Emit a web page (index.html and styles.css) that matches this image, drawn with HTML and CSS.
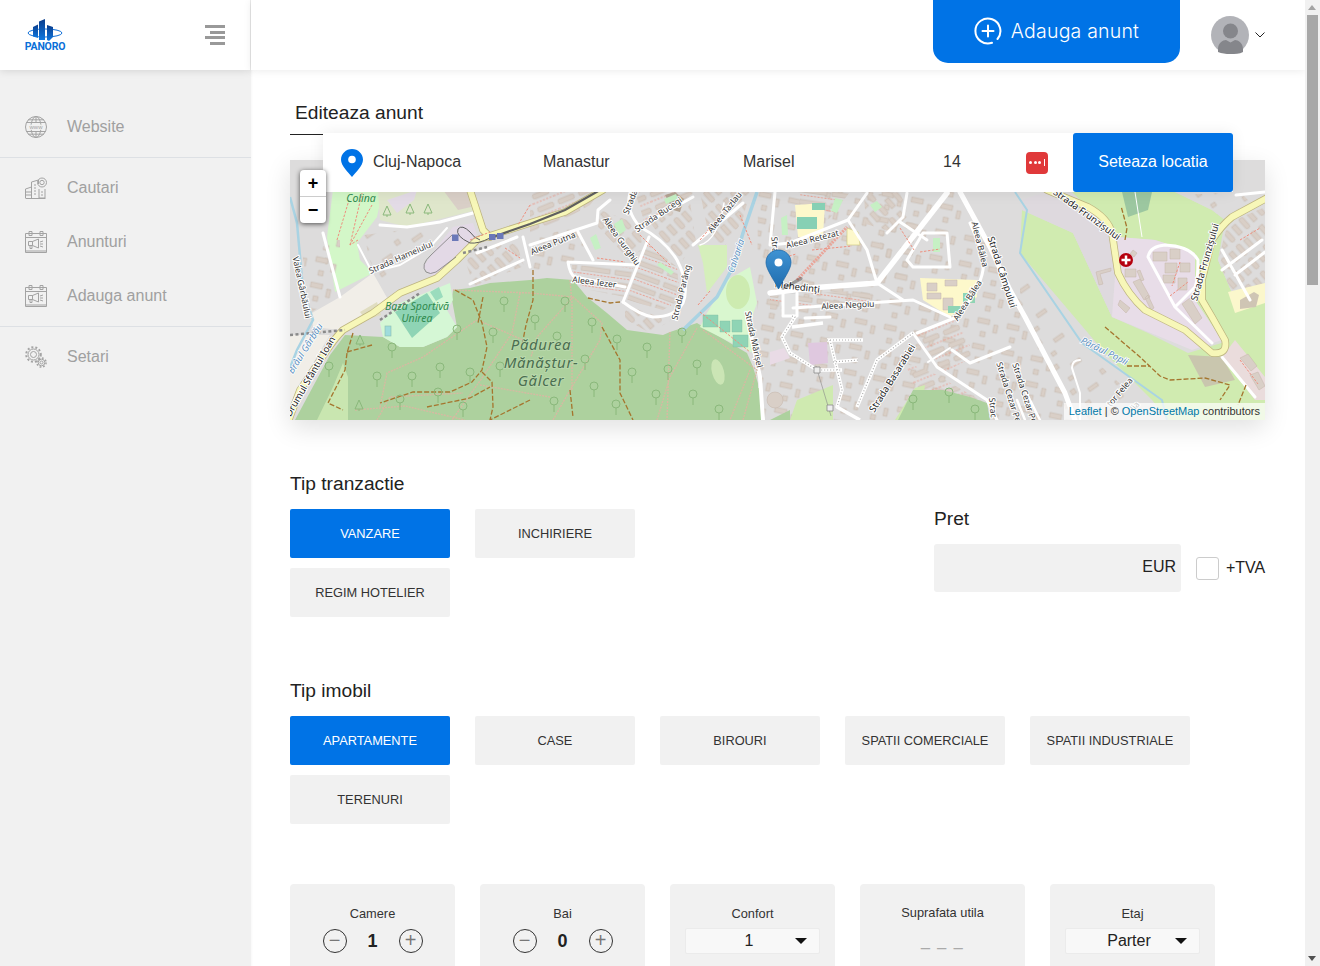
FILE: index.html
```html
<!DOCTYPE html>
<html lang="ro">
<head>
    <meta charset="UTF-8">
    <meta name="viewport" content="width=device-width, initial-scale=1.0">
    <title>Editeaza anunt</title>
    <link rel="stylesheet" href="styles.css">
</head>
<body>
<div class="layout">
    <aside class="sidebar">
        <div class="sidebar-head">
            <div class="logo">
                <svg width="40" height="22" viewBox="0 0 40 22">
                    <defs>
                        <linearGradient id="logoBlue" x1="0" y1="0" x2="0" y2="1">
                            <stop offset="0" stop-color="#0a3c8c"/>
                            <stop offset="1" stop-color="#0f78e0"/>
                        </linearGradient>
                    </defs>
                    <ellipse cx="20" cy="14" rx="17" ry="4" fill="none" stroke="#0f6fd8" stroke-width="1"/>
                    <path d="M8 8l5-2.500V19l-5-1.500z" fill="url(#logoBlue)"/>
                    <path d="M14 2.500L20 0v21h-6z" fill="url(#logoBlue)"/>
                    <path d="M22 6l6 2v10l-4 4-2-1z" fill="url(#logoBlue)"/>
                </svg>
                <span class="logo-text">PANORO</span>
            </div>
            <div class="burger"><span></span><span class="short"></span><span></span><span class="short"></span></div>
        </div>
        <nav class="nav-group">
            <a class="nav-item">
                <svg class="nav-icon" viewBox="0 0 22 22" fill="none" stroke="#a3a3a3" stroke-width="1">
                    <circle cx="11" cy="11" r="10.500"/><ellipse cx="11" cy="11" rx="5" ry="10.500"/><path d="M11 .5v6M11 15.500v6M3 3.800h16M1.500 6.500h19M1.500 15.500h19M3 18.200h16"/>
                    <text x="11" y="13" text-anchor="middle" class="www">www</text>
                </svg>
                <span>Website</span>
            </a>
        </nav>
        <nav class="nav-group">
            <a class="nav-item">
                <svg class="nav-icon" viewBox="0 0 22 22" fill="none" stroke="#a3a3a3" stroke-width="1">
                    <path d="M.5 21.500h20M.5 21v-9l6-2v11M6.500 21V5l7-2v4M14 12v9h6v-9M1 15h5M1 18h5M9 8h2M9 11h2M9 14h2M9 17h2M16 15h2M16 18h2"/>
                    <circle cx="17" cy="5.500" r="4.500"/><circle cx="17" cy="5.500" r="2.200"/>
                </svg>
                <span>Cautari</span>
            </a>
            <a class="nav-item">
                <svg class="nav-icon" viewBox="0 0 22 22" fill="none" stroke="#a3a3a3" stroke-width="1">
                    <path d="M.5 2.500h21v19H.5zM.5 6.500h21M.5 20h21M4 .5h3v4H4zM15 .5h3v4h-3z"/>
                    <path d="M3.500 10.500h4v4h-4zM7.500 10.500l6-2.500v9l-6-2.500zM5 14.500v3h2v-3M15 11l3-1M15 13h3M15 15l3 1"/>
                </svg>
                <span>Anunturi</span>
            </a>
            <a class="nav-item">
                <svg class="nav-icon" viewBox="0 0 22 22" fill="none" stroke="#a3a3a3" stroke-width="1">
                    <path d="M.5 2.500h21v19H.5zM.5 6.500h21M.5 20h21M4 .5h3v4H4zM15 .5h3v4h-3z"/>
                    <path d="M3.500 10.500h4v4h-4zM7.500 10.500l6-2.500v9l-6-2.500zM5 14.500v3h2v-3M15 11l3-1M15 13h3M15 15l3 1"/>
                </svg>
                <span>Adauga anunt</span>
            </a>
        </nav>
        <nav class="nav-group last">
            <a class="nav-item">
                <svg class="nav-icon" viewBox="0 0 22 22" fill="none" stroke="#a3a3a3" stroke-width="1">
                    <circle cx="8.500" cy="8.500" r="3"/><circle cx="8.500" cy="8.500" r="5.500"/>
                    <circle cx="8.500" cy="8.500" r="7.300" stroke-width="2" stroke-dasharray="2 2"/>
                    <circle cx="16.500" cy="16.500" r="1.500"/><circle cx="16.500" cy="16.500" r="3.300"/>
                    <circle cx="16.500" cy="16.500" r="4.600" stroke-width="1.500" stroke-dasharray="1.800 1.800"/>
                </svg>
                <span>Setari</span>
            </a>
        </nav>
    </aside>

    <div class="page">
        <header class="topbar">
            <a class="add-btn">
                <svg width="28" height="28" viewBox="0 0 28 28" fill="none" stroke="#fff" stroke-width="2" stroke-linecap="round">
                    <path d="M18 25.800A12.500 12.500 0 1 1 23.500 22"/><path d="M14 8.500v11M8.500 14h11"/>
                </svg>
                <span>Adauga anunt</span>
            </a>
            <div class="user">
                <svg width="38" height="38" viewBox="0 0 38 38">
                    <circle cx="19" cy="19" r="19" fill="#b2b3b8"/>
                    <circle cx="19.500" cy="15" r="7.500" fill="#85868b"/>
                    <path d="M7 36v-3c0-6 5-9 8-9l4.500 2.500L24 24c3 0 8 3 8 9v3c-3.500 2-8 2-12.500 2s-9-.5-12.500-2z" fill="#85868b"/>
                </svg>
                <svg width="10" height="6" viewBox="0 0 10 6" fill="none" stroke="#222" stroke-width="1"><path d="M.5.500L5 5 9.500.500"/></svg>
            </div>
        </header>

        <main class="content">
            <h2 class="page-title">Editeaza anunt</h2>

            <div class="map-wrap">
                <svg class="map" viewBox="290 160 975 260" width="975" height="260">
                    <defs>
                        <pattern id="rowsA" width="36" height="12" patternUnits="userSpaceOnUse" patternTransform="rotate(20)">
                            <rect x="1" y="2" width="31" height="4.500" fill="#d9cfc7" stroke="#c4b5a9" stroke-width=".5"/>
                            <path d="M0 9.500h36" stroke="#ee8f7e" stroke-width=".8" stroke-dasharray="2 1.500"/>
                        </pattern>
                        <pattern id="rowsB" width="34" height="12" patternUnits="userSpaceOnUse" patternTransform="rotate(8)">
                            <rect x="1" y="2" width="29" height="4.500" fill="#d9cfc7" stroke="#c4b5a9" stroke-width=".5"/>
                            <path d="M0 9.500h34" stroke="#ee8f7e" stroke-width=".8" stroke-dasharray="2 1.500"/>
                        </pattern>
                        <pattern id="rowsC" width="22" height="14" patternUnits="userSpaceOnUse" patternTransform="rotate(-22)">
                            <rect x="2" y="2" width="17" height="5" rx="2" fill="#d9cfc7" stroke="#c4b5a9" stroke-width=".5"/>
                            <path d="M0 11h22" stroke="#ee8f7e" stroke-width=".7" stroke-dasharray="2 1.500"/>
                        </pattern>
                        <pattern id="rowsD" width="18" height="20" patternUnits="userSpaceOnUse" patternTransform="rotate(48)">
                            <rect x="2" y="2" width="13" height="5" rx="2" fill="#d9cfc7" stroke="#c4b5a9" stroke-width=".5"/>
                            <rect x="3" y="12" width="11" height="5" fill="#d9cfc7" stroke="#c4b5a9" stroke-width=".5"/>
                        </pattern>
                        <pattern id="sparse" width="30" height="26" patternUnits="userSpaceOnUse" patternTransform="rotate(12)">
                            <rect x="3" y="3" width="12" height="5" fill="#d9cfc7" stroke="#c4b5a9" stroke-width=".5"/>
                            <rect x="20" y="7" width="4" height="8" fill="#d9cfc7" stroke="#c4b5a9" stroke-width=".5"/>
                            <rect x="8" y="16" width="5" height="5" fill="#d9cfc7" stroke="#c4b5a9" stroke-width=".5"/>
                        </pattern>
                        <pattern id="sparseR" width="36" height="30" patternUnits="userSpaceOnUse" patternTransform="rotate(-35)">
                            <rect x="4" y="4" width="5" height="5" fill="#d9cfc7" stroke="#c4b5a9" stroke-width=".5"/>
                            <rect x="20" y="12" width="11" height="4" fill="#d9cfc7" stroke="#c4b5a9" stroke-width=".5"/>
                            <rect x="10" y="22" width="5" height="4" fill="#d9cfc7" stroke="#c4b5a9" stroke-width=".5"/>
                        </pattern>
                        <linearGradient id="pinBlue" x1="0" y1="0" x2="0" y2="1">
                            <stop offset="0" stop-color="#3f93d3"/>
                            <stop offset="1" stop-color="#1f6cae"/>
                        </linearGradient>
                        <g id="tree" fill="none" stroke="#8ab87b" stroke-width="1"><circle cx="0" cy="-11" r="4"/><path d="M0-7V0"/></g>
                        <path id="fir" d="M0-10l-4 9h8zM0-1v2" fill="none" stroke="#8ab87b" stroke-width="1"/>
                    </defs>

                    <rect x="290" y="160" width="975" height="260" fill="#dddcdc"/>

                    <!-- zone din stanga -->
                    <path d="M327 237L333 190H383L377 217 357 243 360 260 373 273 335 292z" fill="#d3f7c8"/>
                    <path d="M340 297L373 273 390 303 357 323 340 330 313 327 312 313z" fill="#f1eee8"/>
                    <path d="M360 312l17-10 4 13-15 5z" fill="#e0ddc0"/>
                    <path d="M290 335H330L300 385 290 405z" fill="#f1eee8"/>
                    <path d="M378 190H467L477 210 407 227 380 220z" fill="#dfe6cb"/>
                    <path d="M387 200l30-10-3 10-17 13z" fill="#e3dbe6"/>
                    <path d="M443 190h24l4 17-13 3z" fill="#d9cfc7"/>
                    <path d="M423 267L437 247 453 227 473 223 480 243 447 270 433 277z" fill="#e3d9e6"/>
                    <path d="M325 240h15v50h-15z" fill="url(#sparse)"/>
                    <path d="M302 252l22-6 14 48-26 18z" fill="url(#sparse)"/>
                    <path d="M364 235l62-8 4 18-30 22-18 18-12-24z" fill="url(#sparseR)"/>
                    <path d="M464 258l50-22 10 30-50 20z" fill="url(#rowsD)"/>

                    <!-- padure -->
                    <path d="M295 420L330 355 345 335 383 337 400 347 423 347 447 337 457 327 452 300 453 290 470 288 490 283 530 280 547 278 573 280 587 297 607 313 627 330 663 335 670 332 697 323 720 337 747 353 753 367 760 390 763 420z" fill="#add19e"/>
                    <path d="M317 420L333 387 343 363 348 377 348 420z" fill="#c9e6b0"/>
                    <ellipse cx="718" cy="372" rx="6" ry="13" fill="#cbe5b5" transform="rotate(-15 718 372)"/>
                    <path d="M380 323L400 303 450 283 453 300 447 310 457 327 447 337 423 347 400 347 383 337z" fill="#d5f7d5"/>
                    <path d="M395 312L427 293 440 313 412 338z" fill="#8fd4b5"/>
                    <path d="M430 292l9-5 4 10-7 4z" fill="#9adcbd"/>
                    <rect x="385" y="326" width="6" height="10" fill="#9fdcdc" stroke="#8bbdb0" stroke-width=".6"/>

                    <!-- cartier central -->
                    <path d="M647 243L677 267 680 300 663 310 627 300z" fill="url(#rowsA)"/>
                    <path d="M572 265L633 268 625 297 590 290 573 280z" fill="url(#rowsB)"/>
                    <path d="M600 210L627 220 640 233 643 250 627 257 598 227z" fill="url(#rowsD)"/>
                    <path d="M530 192H600L590 205 560 222 530 233z" fill="url(#rowsC)"/>
                    <path d="M530 240l45-14 14 32-30 8-29 6z" fill="url(#sparse)"/>
                    <path d="M635 192h60l-20 14-30 18z" fill="url(#rowsC)"/>
                    <path d="M650 222l40-20 6 40-16 22z" fill="url(#rowsD)"/>
                    <path d="M700 192h50l-8 30-18 25-15-10z" fill="url(#rowsD)"/>
                    <path d="M625 305l35 12 10 4-20 12-25-14z" fill="url(#rowsD)"/>
                    <path d="M665 195l10-3 9 7-4 13-7-2z" fill="#b3a393"/>
                    <path d="M614 224l8-5 4 11-7 5zM660 262l14 10-3 3-14-10zM664 199l12-5 2 5-12 5zM590 238l6-4 5 14-6 2z" fill="#c6f0c4"/>

                    <!-- parc Calvaria -->
                    <path d="M698 245L727 245 727 267 707 293 703 263z" fill="#d5efbb"/>
                    <path d="M707 313L727 280 750 267 757 303 752 317 753 353 740 347 700 327z" fill="#d9f7cf"/>
                    <ellipse cx="738" cy="292" rx="12" ry="17" fill="#cdebb0"/>
                    <path d="M703 315h15v12h-15zM720 321h10v11h-10zM732 320h10v12h-10zM733 335h15v12h-15z" fill="#8fd4b5" stroke="#7fbda5" stroke-width=".4"/>
                    <path d="M758 318h6v70h-6z" fill="#dddcdc"/>

                    <!-- cartier dreapta -->
                    <path d="M758 192H947L960 192 1020 300 1075 420H763L757 320z" fill="url(#sparse)"/>
                    <path d="M770 296l100-6 0 14-100 6zM800 192h50l-20 26-30 20z" fill="url(#rowsB)"/>
                    <path d="M864 196l36-4 8 24-16 16-26-8z" fill="url(#rowsD)"/>
                    <path d="M880 235l30-15 20 15-20 40-30 5z" fill="url(#sparse)"/>
                    <path d="M915 336l40-20 20 40-30 16z" fill="url(#rowsC)"/>
                    <path d="M905 362l30 12 48 28 0 18h-60z" fill="url(#rowsC)"/>
                    <path d="M795 205L825 203 823 237 798 237z" fill="#fdf8cb"/>
                    <path d="M797 217h20v12h-20zM812 203h13v7h-13z" fill="#86d0b4"/>
                    <path d="M781 218l6-3 1 20h-6zM835 198l8 2 -6 13-6-2z" fill="#c6f0c4"/>
                    <path d="M847 228L858 232 860 245 847 245z" fill="#fdf8cb" stroke="#cdc87a" stroke-width=".6"/>
                    <path d="M870 205l7-4 5 6-7 5zM933 238h7v14h-7z" fill="#c6f0c4"/>
                    <path d="M920 278L977 280 977 297 950 317 923 300z" fill="#fdf8cb"/>
                    <path d="M927 283h10v8h-10zM945 280h12v6h-12zM927 293h14v6h-14zM943 298h10v12h-10z" fill="#d9cfc7" stroke="#c4b5a9" stroke-width=".5"/>
                    <path d="M963 293h12v10h-12zM948 306h14v7h-14z" fill="#8fd4b5"/>
                    <path d="M808 343L827 342 828 363 810 365z" fill="#dfc8df"/>
                    <path d="M770 352l14-4 6 10-20 7z" fill="#e9dbe6"/>
                    <path d="M783 293h14v23h-14z" fill="#e3e3e3" stroke="#bdbdbd" stroke-width=".6"/>
                    <path d="M790 420L797 400 833 385 833 420zM895 420L915 388 925 385 920 420z" fill="#cfeab0"/>
                    <path d="M898 420L913 390 943 390 970 397 987 403 990 420zM770 420l20-10v10z" fill="#add19e"/>
                    <circle cx="775" cy="400" r="8" fill="#d9cfc7" stroke="#c4b5a9" stroke-width=".5"/>

                    <!-- dreapta: verde, roz -->
                    <path d="M1022 210L1073 233 1098 287 1112 317 1148 333 1188 353 1265 330V420H1168L1152 400 1105 353 1020 253z" fill="#d0ebb0"/>
                    <path d="M1072 192H1175L1212 210 1225 220 1218 260 1232 293 1265 283V345L1225 345 1195 300V253L1155 240 1118 237z" fill="#d0ebb0"/>
                    <path d="M1022 200L1045 192 1118 237 1112 317 1073 233 1022 210z" fill="#ded9de"/>
                    <path d="M1118 237L1155 240 1195 253 1195 300 1222 340 1192 350 1112 317z" fill="#e8dde8"/>
                    <path d="M1122 192L1152 192 1148 210 1128 217z" fill="#9cc7a0"/>
                    <path d="M1135 192l7 45" stroke="#fff" stroke-width="1" fill="none"/>
                    <path d="M1175 192L1238 192 1265 197 1225 220 1212 210z" fill="#dddcdc"/>
                    <path d="M1228 223L1265 207 1265 283 1232 293 1218 260z" fill="#dddcdc"/>
                    <path d="M1228 223L1265 207 1265 283 1232 293 1218 260z" fill="url(#rowsD)"/>
                    <path d="M1180 195l60-3 10 10-26 16-14-6z" fill="url(#sparseR)"/>
                    <path d="M1228 292L1265 283 1265 303 1235 313z" fill="#fbf7cc"/>
                    <path d="M1240 300l14-8 5 3-3 12-16 2z" fill="#cfc5b4"/>
                    <path d="M1222 357L1235 340 1265 377 1265 400 1255 400z" fill="#eadcdc"/>
                    <path d="M1188 355L1222 357 1235 380 1205 387z" fill="#c9c6ae"/>
                    <path d="M1153 252h14v9h-14zM1170 249h10v10h-10zM1165 263h12v10h-12zM1180 263h10v9h-10zM1163 275h12v8h-12zM1178 278h9v12h-9z" fill="#d9cfc7" stroke="#c4b5a9" stroke-width=".5"/>
                    <path d="M1125 269h11v8h-11zM1133 250l4 3-3 4-4-3zM1140 270l4 10-3 1-4-10z" fill="#d9cfc7" stroke="#c4b5a9" stroke-width=".5"/>
                    <path d="M1096 272l15-4v3l-11 3 3 10-4 1z" fill="#d9cfc7" stroke="#c4b5a9" stroke-width=".5"/>
                    <path d="M1133 282l7-3 10 18-6 3zM1120 300l10 8-4 5-8-8zM1148 295l6 13-3 2-6-12z" fill="#d9cfc7" stroke="#c4b5a9" stroke-width=".5"/>
                    <path d="M1182 304l8-6 12 20-7 6z" fill="#d9cfc7" stroke="#c4b5a9" stroke-width=".5"/>
                    <path d="M1240 358l8-4 9 12-6 5zM1250 375l8-3 7 14-6 4z" fill="#d9cfc7" stroke="#c4b5a9" stroke-width=".5"/>
                    <path d="M1020 262l60 85 60 55-30 18h-40l-50-120z" fill="url(#sparseR)"/>
                    <path d="M1270 0z" fill="none"/>

                    <!-- ape -->
                    <g fill="none" stroke="#a9d3e3">
                        <path d="M1015 192L1027 210 1020 253 1082 343 1162 400 1167 420" stroke-width="2"/>
                        <path d="M290 197L297 223 303 290 313 320 297 350 290 368" stroke-width="2.500"/>
                        <path d="M757 192L743 233 733 267 717 297 683 330" stroke-width="3.500"/>
                    </g>

                    <!-- drumuri albe -->
                    <g fill="none" stroke="#fff" stroke-width="3" stroke-linejoin="round" stroke-linecap="round">
                        <path d="M323 233L340 297"/>
                        <path d="M380 225L407 227 440 222 473 213"/>
                        <path d="M358 245L372 272 400 265 430 247 447 228" stroke-width="2"/>
                        <path d="M470 284L523 260M477 253L517 237M523 237L530 267"/>
                        <path d="M530 245L597 223 598 210 610 200M578 232L593 260"/>
                        <path d="M693 197Q655 218 640 227Q625 210 630 193"/>
                        <path d="M640 227Q665 240 677 260Q690 285 683 303Q675 317 653 317Q640 315 623 302"/>
                        <path d="M649 237L623 302"/>
                        <path d="M568 262L637 265M568 262Q570 275 575 277L625 287"/>
                        <path d="M693 245L743 203"/>
                        <path d="M747 317L760 377 763 420" stroke-width="4"/>
                        <path d="M724 203Q718 240 700 245" stroke-width="1.500"/>
                        <path d="M775 192L770 245M770 245L790 243 848 220M848 220L867 193"/>
                        <path d="M848 220L867 250 877 283"/>
                        <path d="M900 222L927 240M907 193L903 217 887 233"/>
                        <path d="M947 233L923 233 907 260 913 267 950 267z"/>
                        <path d="M793 308L913 300 950 317M877 283L903 300"/>
                        <path d="M805 318l25-1"/>
                        <path d="M970 223Q985 255 983 270 980 290 957 317L917 333"/>
                        <path d="M913 333L937 367 987 400 997 420"/>
                        <path d="M952 350L970 363 1010 347"/>
                        <path d="M950 348l-22 14" stroke-width="2"/>
                        <path d="M1025 420l-8-20M1040 420l-15-30" stroke-width="2.500"/>
                        <path d="M1080 360q-8 0-8 8l8 25 0 27" stroke-width="2"/>
                        <path d="M1148 257Q1150 246 1165 245 1190 246 1198 260 1198 280 1195 287L1175 307M1148 257L1175 307 1212 343" stroke-width="3"/>
                        <path d="M1222 357L1255 397"/>
                        <path d="M1222 250L1250 300M1222 270L1262 240M1235 275L1265 252M1236 195l29-3"/>
                        <path d="M960 192L990 247 1010 290 1025 317 1065 393 1075 420" stroke-width="5"/>
                        <path d="M770 293L810 288 877 283 947 193" stroke-width="5.500"/>
                        <path d="M783 293v23h14v-23" stroke-width="3"/>
                    </g>
                    <!-- alei pietonale -->
                    <g fill="none" stroke="#fff" stroke-width="3.500" stroke-linejoin="round">
                        <path d="M792 316L795 317 782 337 790 353 817 370 842 370M792 327L823 323M827 340L863 340M833 362L858 360M830 340L842 390 837 407 860 420"/>
                        <path d="M913 333L877 360 857 407"/>
                    </g>
                    <g fill="none" stroke="#aaa" stroke-width="1.200" stroke-dasharray="1 2">
                        <path d="M792 316L795 317 782 337 790 353 817 370 842 370M827 340L863 340M833 362L858 360M830 340L842 390 837 407"/>
                        <path d="M913 333L877 360 857 407"/>
                    </g>
                    <path d="M797 280L847 227" stroke="#e9a59a" stroke-width="3" stroke-dasharray="2 1" fill="none"/>
                    <path d="M816 366l15 50" stroke="#888" stroke-width=".6" fill="none"/>
                    <path d="M814 367h6v6h-6zM827 405h6v6h-6z" fill="#eee" stroke="#888" stroke-width=".8"/>

                    <!-- drumuri galbene -->
                    <g fill="none" stroke-linecap="round" stroke-linejoin="round">
                        <g stroke="#bdb47f" stroke-width="7.500">
                            <path d="M288 422L300 390 327 350Q335 338 343 330L373 313 400 293 437 278 457 260 477 240 530 223 565 212 603 190"/>
                            <path d="M470 190L483 230 490 237"/>
                            <path d="M1047 190L1088 207Q1108 218 1112 233L1118 273Q1128 295 1145 310L1185 330 1212 353Q1228 355 1225 340L1212 317 1202 300V280L1212 240Q1222 225 1232 217L1267 198"/>
                        </g>
                        <g stroke="#f7f7b8" stroke-width="6">
                            <path d="M288 422L300 390 327 350Q335 338 343 330L373 313 400 293 437 278 457 260 477 240 530 223 565 212 603 190"/>
                            <path d="M470 190L483 230 490 237"/>
                            <path d="M1047 190L1088 207Q1108 218 1112 233L1118 273Q1128 295 1145 310L1185 330 1212 353Q1228 355 1225 340L1212 317 1202 300V280L1212 240Q1222 225 1232 217L1267 198"/>
                        </g>
                    </g>
                    <!-- cale ferata -->
                    <g fill="none" stroke="#5f5f5f">
                        <path d="M490 238L530 224 565 210 600 190" stroke-width="2.200"/>
                        <path d="M490 238Q478 244 470 243 455 236 458 229 462 224 470 232 474 238 480 240" stroke-width="1"/>
                        <path d="M452 235L431 255Q420 265 426 272 430 275 436 272L456 257" stroke="#7c7c7c" stroke-width=".8"/>
                    </g>
                    <path d="M452 234.500h6.500v6.500H452zM489 234h6.500v6H489zM497 233h6.500v6H497z" fill="#6b78b8"/>
                    <g fill="none" stroke="#8a8a8a" stroke-width="2.500" stroke-dasharray="3 2.500">
                        <path d="M290 335L345 330"/>
                        <path d="M380 320L420 293"/>
                        <path d="M463 253L487 247"/>
                    </g>

                    <!-- poteci -->
                    <g fill="none" stroke="#d7b9a2" stroke-width="1.400" stroke-dasharray="2 1">
                        <path d="M380 407L387 373 423 357 477 320"/>
                        <path d="M377 420L390 397 463 393M453 290L530 293 573 297 602 323 600 340 570 390 553 420"/>
                        <path d="M570 280L572 303 572 390M670 332L667 420M697 328L670 377 657 420"/>
                        <path d="M703 330L757 370 743 420M750 370L730 420M520 293l-8 40-30 45 -30 42M480 385l70 12M482 322l50 22"/>
                        <path d="M573 297l-36 40-6 20M355 410l50-4 60 14"/>
                        <path d="M300 0z"/>
                    </g>
                    <g fill="none" stroke="#ee8f7e" stroke-width="1" stroke-dasharray="2.500 1.500">
                        <path d="M337 240l12-40M350 245l12-52M372 205l-22 40M358 240l-8 5"/>
                        <path d="M470 240l20-8M505 248l15 10M530 205l-12 20M597 258l28 4M640 235l30 30M700 240l20-24M740 215l12 30M770 262l26-8M812 250l40-4M900 228l14 22M920 252l20-3M1170 296l18-14M1180 262l-8 24M1240 240l20-12M1240 360l18 24M700 312l50 40M698 305l12-14"/>
                    </g>
                    <g fill="none" stroke="#a5752e" stroke-width="1.300" stroke-dasharray="5 2">
                        <path d="M455 290L473 300 482 323 487 347 482 370 472 382 450 392 413 392 380 403"/>
                        <path d="M483 297L478 323"/>
                        <path d="M353 333L347 353 345 370 328 403 343 410"/>
                        <path d="M347 352L372 345"/>
                        <path d="M482 372L492 382 493 407 490 420"/>
                        <path d="M427 407L470 398 490 387M530 400L490 420"/>
                        <path d="M533 270L533 300 526 325 522 345"/>
                        <path d="M588 298L610 303 620 302"/>
                        <path d="M602 327L620 360 620 393 633 420"/>
                        <path d="M570 390L573 417"/>
                        <path d="M1105 327L1140 357 1160 376 1170 380 1205 378 1230 385 1220 400M1127 366H1150M1130 182M1125 240l2-12-6-22M1246 385l-8 20"/>
                    </g>

                    <use href="#tree" x="504" y="312"/><use href="#tree" x="493" y="343"/><use href="#tree" x="500" y="377"/>
                    <use href="#tree" x="440" y="378"/><use href="#tree" x="412" y="387"/><use href="#tree" x="392" y="358"/>
                    <use href="#tree" x="377" y="387"/><use href="#tree" x="329" y="377"/><use href="#tree" x="470" y="383"/>
                    <use href="#tree" x="457" y="340"/><use href="#tree" x="400" y="410"/><use href="#tree" x="438" y="403"/>
                    <use href="#tree" x="463" y="417"/><use href="#tree" x="565" y="312"/><use href="#tree" x="535" y="330"/>
                    <use href="#tree" x="592" y="333"/><use href="#tree" x="617" y="350"/><use href="#tree" x="647" y="358"/>
                    <use href="#tree" x="682" y="343"/><use href="#tree" x="697" y="375"/><use href="#tree" x="693" y="405"/>
                    <use href="#tree" x="719" y="420"/><use href="#tree" x="632" y="383"/><use href="#tree" x="585" y="370"/>
                    <use href="#tree" x="594" y="397"/><use href="#tree" x="554" y="412"/><use href="#tree" x="616" y="415"/>
                    <use href="#tree" x="557" y="347"/><use href="#tree" x="668" y="380"/><use href="#tree" x="656" y="405"/>
                    <use href="#tree" x="913" y="410"/><use href="#tree" x="949" y="403"/><use href="#tree" x="975" y="420"/>
                    <use href="#fir" x="360" y="345"/><use href="#fir" x="359" y="410"/>
                    <use href="#fir" x="387" y="216"/><use href="#fir" x="410" y="214"/><use href="#fir" x="428" y="214"/>

                    <!-- etichete -->
                    <g class="lbl">
                        <text transform="translate(402 260) rotate(-24)">Strada Hameiului</text>
                        <text transform="translate(554 246) rotate(-22)">Aleea Putna</text>
                        <text transform="translate(619 243) rotate(54)">Aleea Gurghiu</text>
                        <text transform="translate(594 285) rotate(7)">Aleea Iezer</text>
                        <text transform="translate(660 217) rotate(-34)">Strada Bucegi</text>
                        <text transform="translate(727 214) rotate(-52)">Aleea Tazlau</text>
                        <text transform="translate(633 203) rotate(-68)">Strada</text>
                        <text transform="translate(684 293) rotate(-76)">Strada Parâng</text>
                        <text transform="translate(751 340) rotate(78)">Strada Mărișel</text>
                        <text transform="translate(813 242) rotate(-14)">Aleea Retezat</text>
                        <text transform="translate(848 308) rotate(-3)">Aleea Negoiu</text>
                        <text transform="translate(772 245) rotate(84)">Stra</text>
                        <text class="big" transform="translate(797 290) rotate(7)">Mehedinți</text>
                        <text transform="translate(977 245) rotate(76)">Aleea Bâlea</text>
                        <text transform="translate(970 302) rotate(-58)">Aleea Bâlea</text>
                        <text class="big" transform="translate(999 273) rotate(72)">Strada Câmpului</text>
                        <text class="big" transform="translate(895 380) rotate(-58)">Strada Basarabiei</text>
                        <text transform="translate(1006 393) rotate(72)">Strada Cezar Pe</text>
                        <text transform="translate(1022 394) rotate(72)">Strada Cezar Pe</text>
                        <text transform="translate(990 408) rotate(84)">Strac</text>
                        <text class="big" transform="translate(1085 217) rotate(36)">Strada Frunzișului</text>
                        <text class="big" transform="translate(1208 263) rotate(-74)">Strada Frunzișului</text>
                        <text transform="translate(1122 394) rotate(-50)">tor Felea</text>
                        <text transform="translate(1137 408) rotate(-50)">lia</text>
                        <text class="big" transform="translate(313 378) rotate(-60)">Drumul Sfântul Ioan</text>
                        <text transform="translate(299 288) rotate(78)">Valea Gârbăului</text>
                    </g>
                    <g class="lbl-water">
                        <text transform="translate(739 257) rotate(-72)">Calvaria</text>
                        <text transform="translate(308 350) rotate(-58)">Brâul Gârbău</text>
                        <text transform="translate(1103 354) rotate(26)">Pârâul Popii</text>
                    </g>
                    <g class="lbl-green">
                        <text x="361" y="202">Colina</text>
                        <text x="417" y="310">Baza Sportivă</text>
                        <text x="417" y="322">Unirea</text>
                    </g>
                    <g class="lbl-forest">
                        <text x="541" y="350">Pădurea</text>
                        <text x="541" y="368">Mănăștur-</text>
                        <text x="541" y="386">Gălcer</text>
                    </g>

                    <circle cx="1126" cy="260" r="7" fill="#b5000e"/>
                    <path d="M1126 255.500v9M1121.500 260h9" stroke="#fff" stroke-width="2.500"/>

                    <!-- marker -->
                    <path d="M781 289l17-11c3-2 6-1 4 2l-19 10z" fill="#000" opacity=".3"/>
                    <path d="M778.500 250c-7 0-12.500 5.500-12.500 12.500 0 7 8 17 12.500 26.500 4.500-9.500 12.500-19.500 12.500-26.500 0-7-5.500-12.500-12.500-12.500z" fill="url(#pinBlue)" stroke="#1f6aa8" stroke-width=".8"/>
                    <circle cx="778.500" cy="262.500" r="4" fill="#fff"/>
                </svg>

                <div class="zoom-ctl">
                    <a class="zoom-btn">+</a>
                    <a class="zoom-btn">−</a>
                </div>
                <div class="attribution"><a>Leaflet</a> | © <a>OpenStreetMap</a> contributors</div>

                <div class="location-bar">
                    <svg class="pin" width="22" height="28" viewBox="0 0 22 28">
                        <path d="M11 0C4.900 0 0 4.800 0 10.700 0 17 7.500 23.500 11 28c3.500-4.500 11-11 11-17.300C22 4.800 17.100 0 11 0z" fill="#0073e6"/>
                        <circle cx="11" cy="10.500" r="3.800" fill="#fff"/>
                    </svg>
                    <span class="loc-col w170">Cluj-Napoca</span>
                    <span class="loc-col w200">Manastur</span>
                    <span class="loc-col w200">Marisel</span>
                    <span class="loc-col w83">14</span>
                    <span class="keypad"><i></i><i></i><i></i><b></b></span>
                    <a class="set-btn">Seteaza locatia</a>
                </div>
            </div>

            <section class="deal">
                <div class="deal-types">
                    <h3 class="section-title">Tip tranzactie</h3>
                    <div class="options">
                        <a class="option active">VANZARE</a>
                        <a class="option">INCHIRIERE</a>
                        <a class="option">REGIM HOTELIER</a>
                    </div>
                </div>
                <div class="price">
                    <h3 class="section-title">Pret</h3>
                    <div class="price-row">
                        <div class="price-input">EUR</div>
                        <span class="check"></span>
                        <span class="vat">+TVA</span>
                    </div>
                </div>
            </section>

            <section class="estate">
                <h3 class="section-title">Tip imobil</h3>
                <div class="options">
                    <a class="option active">APARTAMENTE</a>
                    <a class="option">CASE</a>
                    <a class="option">BIROURI</a>
                    <a class="option">SPATII COMERCIALE</a>
                    <a class="option">SPATII INDUSTRIALE</a>
                    <a class="option">TERENURI</a>
                </div>
            </section>

            <section class="cards">
                <div class="card">
                    <div class="card-label">Camere</div>
                    <div class="stepper">
                        <span class="round">−</span><b class="count">1</b><span class="round">+</span>
                    </div>
                </div>
                <div class="card">
                    <div class="card-label">Bai</div>
                    <div class="stepper">
                        <span class="round">−</span><b class="count">0</b><span class="round">+</span>
                    </div>
                </div>
                <div class="card">
                    <div class="card-label">Confort</div>
                    <div class="fake-select">1</div>
                </div>
                <div class="card">
                    <div class="card-label up">Suprafata utila</div>
                    <div class="blank">_ _ _</div>
                </div>
                <div class="card">
                    <div class="card-label">Etaj</div>
                    <div class="fake-select">Parter</div>
                </div>
            </section>
        </main>
    </div>
</div>

<div class="scrollbar">
    <span class="arrow-up"></span>
    <span class="thumb"></span>
    <span class="arrow-down"></span>
</div>
</body>
</html>
```

FILE: styles.css
```css
body {
    margin: 0;
    background-color: white;
    font-family: "Liberation Sans", Arial, sans-serif;
    color: #222;
}

a {
    color: inherit;
    text-decoration: none;
}

.layout {
    display: flex;
    min-height: 3349px;
    margin-right: 15px;
}

/* bara de derulare */
.scrollbar {
    position: fixed;
    top: 0;
    right: 0;
    bottom: 0;
    width: 15px;
    background-color: #f1f1f1;
}

.arrow-up,
.arrow-down {
    position: absolute;
    left: 3px;
    border-left: 4.500px solid transparent;
    border-right: 4.500px solid transparent;
}

.arrow-up {
    top: 5px;
    border-bottom: 5px solid #a3a3a3;
}

.arrow-down {
    bottom: 5px;
    border-top: 5px solid #505050;
}

.thumb {
    position: absolute;
    top: 15px;
    left: 2px;
    width: 11px;
    height: 270px;
    background-color: #a8a8a8;
}

/* meniul din stanga */
.sidebar {
    width: 251px;
    flex-shrink: 0;
    background-color: #f1f1f1;
    box-shadow: 1px 0 2px rgba(0,0,0,0.03);
}

.sidebar-head {
    height: 70px;
    background-color: white;
    box-shadow: 0 1px 8px rgba(0,0,0,0.12);
    display: flex;
    align-items: center;
    justify-content: space-between;
    padding: 0 25px;
    margin-bottom: 27px;
    margin-right: 1px;
}

.logo {
    width: 40px;
    display: flex;
    flex-direction: column;
    align-items: center;
}

.logo-text {
    font-family: Roboto, sans-serif;
    font-weight: 700;
    font-size: 10.500px;
    line-height: 11px;
    color: #0a6fd8;
    letter-spacing: -.2px;
}

.burger {
    width: 20px;
    display: flex;
    flex-direction: column;
    align-items: flex-end;
    gap: 2.600px;
}

.burger span {
    display: block;
    width: 20px;
    height: 3px;
    background-color: #999;
}

.burger .short {
    width: 15px;
}

.nav-group {
    padding: 2px 0 4px;
    border-bottom: 1px solid #dde0e4;
}

.nav-group.last {
    border-bottom: none;
}

.nav-item {
    height: 54px;
    box-sizing: border-box;
    display: flex;
    align-items: center;
    gap: 20px;
    padding: 2px 0 0 25px;
    font-size: 16px;
    color: #a0a0a0;
}

.nav-icon {
    width: 22px;
    height: 22px;
}

.www {
    font-family: "Liberation Sans", sans-serif;
    font-size: 6px;
    fill: #a3a3a3;
    stroke: #f1f1f1;
    stroke-width: 1.500px;
    paint-order: stroke;
}

/* bara de sus */
.page {
    flex: 1;
    min-width: 0;
}

.topbar {
    height: 70px;
    background-color: white;
    box-shadow: 0 1px 8px rgba(0,0,0,0.08);
    display: flex;
    justify-content: flex-end;
    align-items: flex-start;
    padding-right: 40px;
}

.add-btn {
    width: 247px;
    height: 63px;
    padding-bottom: 2px;
    box-sizing: border-box;
    background-color: #0073e6;
    border-radius: 0 0 15px 15px;
    color: white;
    display: flex;
    align-items: center;
    justify-content: center;
    gap: 9px;
    font-family: Inter, sans-serif;
    font-size: 19.500px;
    font-weight: 300;
    letter-spacing: .2px;
}

.user {
    display: flex;
    align-items: center;
    gap: 6px;
    margin: 16px 0 0 31px;
}

.content {
    padding: 30px 40px 0 39px;
}

.page-title {
    margin: 0;
    padding: 0 0 9px 5px;
    font-size: 19.200px;
    line-height: 25px;
    font-weight: 400;
    width: 200px;
    border-bottom: 1px solid #222;
}

/* harta */
.map-wrap {
    position: relative;
    margin-top: 25px;
    height: 260px;
    box-shadow: 0 8px 24px rgba(0,0,0,0.12);
}

.map {
    display: block;
}

.lbl text {
    font-family: "Noto Sans", sans-serif;
    font-size: 8.500px;
    fill: #333;
    text-anchor: middle;
    stroke: #fff;
    stroke-width: 2px;
    paint-order: stroke;
}

.lbl .big {
    font-size: 9.500px;
    fill: #222;
}

.lbl-water text {
    font-family: "Noto Sans", sans-serif;
    font-size: 9.500px;
    font-style: italic;
    fill: #5c8fc0;
    text-anchor: middle;
    stroke: #fff;
    stroke-width: 1.500px;
    paint-order: stroke;
}

.lbl-green text {
    font-family: "Noto Sans", sans-serif;
    font-size: 10.500px;
    font-style: italic;
    fill: #2f8a4e;
    text-anchor: middle;
}

.lbl-forest text {
    font-family: "Noto Sans", sans-serif;
    font-size: 15px;
    font-style: italic;
    fill: #4b6e50;
    letter-spacing: .6px;
    text-anchor: middle;
    stroke: #b8d8ab;
    stroke-width: 2px;
    paint-order: stroke;
}

.zoom-ctl {
    position: absolute;
    left: 10px;
    top: 10px;
    z-index: 3;
    width: 26px;
    background-color: white;
    border-radius: 4px;
    box-shadow: 0 1px 5px rgba(0,0,0,0.65);
}

.zoom-btn {
    display: block;
    height: 26px;
    line-height: 26px;
    text-align: center;
    font-weight: 700;
    font-size: 18px;
    color: black;
}

.zoom-btn:first-child {
    border-bottom: 1px solid #ccc;
}

.attribution {
    position: absolute;
    right: 0;
    bottom: 0;
    padding: 0 5px;
    background-color: rgba(255,255,255,0.7);
    font-size: 11px;
    line-height: 17px;
    color: #333;
}

.attribution a {
    color: #0078a8;
}

.location-bar {
    position: absolute;
    left: 33px;
    right: 32px;
    top: -27px;
    height: 59px;
    background-color: white;
    box-shadow: 0 0 14px rgba(0,0,0,0.08);
    display: flex;
    align-items: center;
    font-size: 16px;
    color: #333;
    padding-left: 18px;
    z-index: 2;
}

.pin {
    margin-right: 10px;
}

.loc-col {
    margin-top: -2px;
}

.w170 { width: 170px; }
.w200 { width: 200px; }
.w83 { width: 83px; }

.keypad {
    width: 22px;
    height: 22px;
    background-color: #e0393a;
    border-radius: 4px;
    display: flex;
    align-items: center;
    justify-content: center;
    gap: 1.500px;
}

.keypad i {
    width: 3px;
    height: 3px;
    border-radius: 50%;
    background-color: white;
}

.keypad b {
    width: 1px;
    height: 7px;
    margin-left: 1px;
    background-color: white;
}

.set-btn {
    margin-left: auto;
    width: 160px;
    height: 59px;
    padding-bottom: 2px;
    box-sizing: border-box;
    background-color: #0073e6;
    border-radius: 3px;
    color: white;
    display: flex;
    align-items: center;
    justify-content: center;
}

/* sectiuni formular */
.section-title {
    margin: 0 0 13px;
    font-size: 19.200px;
    line-height: 24px;
    font-weight: 400;
}

.deal {
    display: flex;
    margin-top: 52px;
}

.deal-types {
    width: 644px;
    flex-shrink: 0;
}

.deal-types .options {
    width: 400px;
}

.options {
    display: flex;
    flex-wrap: wrap;
    gap: 10px 25px;
}

.option {
    width: 160px;
    height: 49px;
    display: flex;
    align-items: center;
    justify-content: center;
    background-color: #f1f1f1;
    border-radius: 2px;
    font-size: 12.800px;
    color: #333;
}

.option.active {
    background-color: #0073e6;
    color: white;
}

.price {
    padding-top: 35px;
    flex: 1;
}

.price-row {
    display: flex;
    align-items: center;
}

.price-input {
    width: 247px;
    height: 48px;
    box-sizing: border-box;
    background-color: #f1f1f1;
    border-radius: 3px;
    padding-right: 5px;
    text-align: right;
    line-height: 45px;
    font-size: 16px;
}

.check {
    width: 21px;
    height: 21px;
    margin: 0 7px 0 15px;
    background-color: white;
    border: 1px solid #ccc;
    border-radius: 3px;
}

.vat {
    font-size: 16px;
}

.estate {
    margin-top: 62px;
}

.cards {
    display: flex;
    gap: 25px;
    margin-top: 60px;
}

.card {
    width: 165px;
    height: 130px;
    background-color: #f1f1f1;
    border-radius: 4px;
    padding-top: 22px;
    box-sizing: border-box;
    text-align: center;
}

.card-label {
    font-size: 12.800px;
    line-height: 15px;
    color: #333;
}

.card-label.up {
    margin-top: -1px;
}

.stepper {
    display: flex;
    justify-content: center;
    align-items: center;
    margin-top: 8px;
}

.round {
    width: 24px;
    height: 24px;
    box-sizing: border-box;
    border: 1px solid #333;
    border-radius: 50%;
    background-color: #f1f1f1;
    color: #777;
    font-size: 20px;
    line-height: 20px;
    text-align: center;
}

.count {
    width: 52px;
    font-size: 18px;
    text-align: center;
}

.fake-select {
    position: relative;
    width: 135px;
    height: 26px;
    box-sizing: border-box;
    margin: 7px auto 0;
    padding-right: 7px;
    background-color: #f8f8f8;
    border: 1px solid #ebebeb;
    border-radius: 2px;
    font-size: 16px;
    line-height: 24px;
    text-align: center;
}

.fake-select::after {
    content: "";
    position: absolute;
    right: 12px;
    top: 9px;
    border-left: 6px solid transparent;
    border-right: 6px solid transparent;
    border-top: 6px solid #111;
}

.blank {
    margin-top: 12px;
    font-size: 16px;
    line-height: 18px;
    color: #aaa;
    letter-spacing: 1.500px;
}
```
